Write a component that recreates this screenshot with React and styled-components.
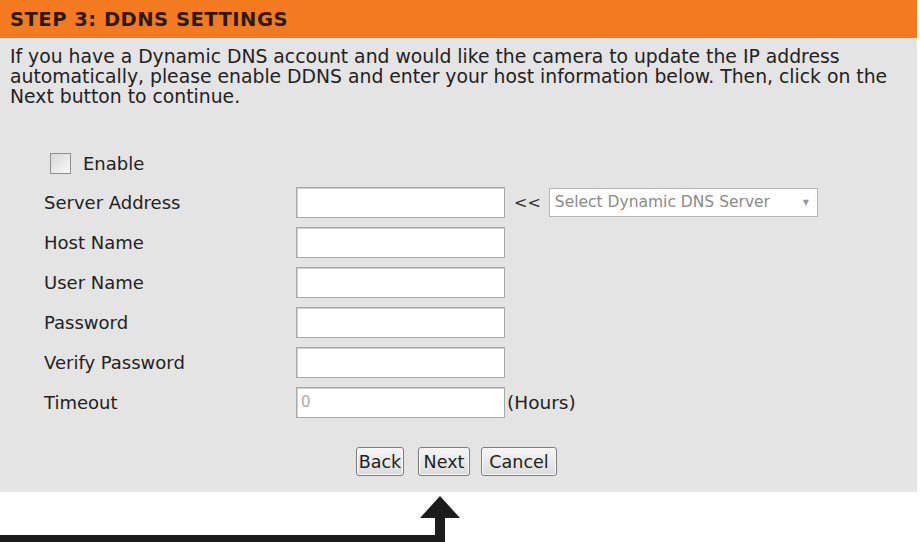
import styled, { createGlobalStyle } from "styled-components";

const Global = createGlobalStyle`
  body {
    margin: 0;
    background: #ffffff;
    font-family: "DejaVu Sans", Verdana, sans-serif;
  }
`;

const Page = styled.div`
  width: 917px;
  height: 492px;
  background: #e4e4e4;
  color: #222;
`;

const Header = styled.div`
  height: 38px;
  background: #f47a22;
  display: flex;
  align-items: center;
  padding-left: 10px;
  font-weight: bold;
  font-size: 19.5px;
  letter-spacing: 0.5px;
  color: #2b1a0e;
`;

const Intro = styled.p`
  margin: 0;
  padding: 9px 10px 0 10px;
  font-size: 18.8px;
  line-height: 20px;
  white-space: nowrap;
`;

const Form = styled.div`
  margin-top: 37px;
  padding-left: 44px;
`;

const Row = styled.div`
  display: flex;
  align-items: center;
  height: ${(p) => p.$h || 40}px;
  font-size: 18px;
`;

const Label = styled.div`
  width: 252px;
`;

const CheckLabel = styled.label`
  display: flex;
  align-items: center;
  gap: 12px;
  padding-left: 6px;
`;

const Box = styled.span`
  width: 19px;
  height: 19px;
  border: 1px solid #8f8f8f;
  background: linear-gradient(135deg, #d9d9d9, #f8f8f8);
`;

const Field = styled.div`
  width: 203px;
  height: 29px;
  background: #fff;
  border: 1px solid #a9a9a9;
  box-shadow: inset 1px 1px 0 #d0d0d0;
  display: flex;
  align-items: center;
  padding-left: 4px;
  box-sizing: content-box;
  color: #aaa;
  font-size: 15px;
`;

const Arrows = styled.span`
  margin: 0 8px 0 9px;
  font-size: 16px;
  color: #333;
`;

const Select = styled.div`
  width: 254px;
  height: 27px;
  border: 1px solid #b5b5b5;
  background: #fff;
  display: flex;
  align-items: center;
  justify-content: space-between;
  padding: 0 8px 0 5px;
  color: #8a8a8a;
  font-size: 15.5px;
`;

const Caret = styled.span`
  font-size: 8px;
  color: #999;
`;

const Suffix = styled.span`
  margin-left: 2px;
  font-size: 18.5px;
`;

const Buttons = styled.div`
  display: flex;
  margin-top: 25px;
  padding-left: 356px;
`;

const Button = styled.button`
  font-family: inherit;
  font-size: 17.5px;
  color: #222;
  height: 29px;
  width: ${(p) => p.$w}px;
  margin-right: ${(p) => p.$gap || 0}px;
  padding: 0;
  border: 1px solid #7d7d7d;
  border-radius: 3px;
  background: linear-gradient(#f6f6f6, #dcdcdc);
  box-shadow: inset 0 0 0 1px #fafafa;
`;

const Pointer = styled.svg`
  display: block;
`;

const fields = [
  ["Host Name"],
  ["User Name"],
  ["Password"],
  ["Verify Password"],
];

export default function App() {
  return (
    <>
      <Global />
      <Page>
        <Header>STEP 3: DDNS SETTINGS</Header>
        <Intro>
          If you have a Dynamic DNS account and would like the camera to update the IP address
          <br />
          automatically, please enable DDNS and enter your host information below. Then, click on the
          <br />
          Next button to continue.
        </Intro>
        <Form>
          <Row $h={38}>
            <CheckLabel>
              <Box />
              Enable
            </CheckLabel>
          </Row>
          <Row>
            <Label>Server Address</Label>
            <Field />
            <Arrows>&lt;&lt;</Arrows>
            <Select>
              Select Dynamic DNS Server
              <Caret>▼</Caret>
            </Select>
          </Row>
          {fields.map(([name]) => (
            <Row key={name}>
              <Label>{name}</Label>
              <Field />
            </Row>
          ))}
          <Row>
            <Label>Timeout</Label>
            <Field>0</Field>
            <Suffix>(Hours)</Suffix>
          </Row>
        </Form>
        <Buttons>
          <Button $w={48} $gap={14}>Back</Button>
          <Button $w={52} $gap={11}>Next</Button>
          <Button $w={76}>Cancel</Button>
        </Buttons>
      </Page>
      <Pointer width="470" height="50" viewBox="0 0 470 50">
        <polygon points="440,4 420,26 460,26" fill="#1c1c1c" />
        <rect x="435" y="25" width="10" height="25" fill="#1c1c1c" />
        <rect x="0" y="43" width="445" height="7" fill="#1c1c1c" />
      </Pointer>
    </>
  );
}
